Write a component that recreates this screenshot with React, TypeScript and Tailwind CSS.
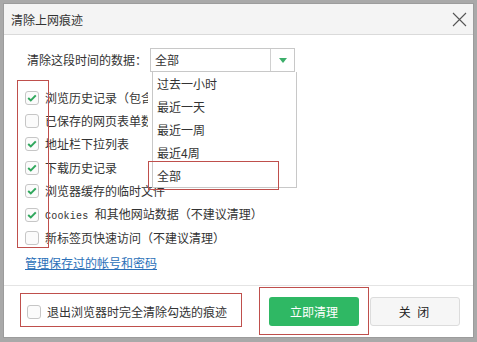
import React from "react";

const font = { fontFamily: '"Noto Sans CJK SC", "Noto Sans", sans-serif' };

function Box({ checked }: { checked: boolean }) {
  return (
    <span className="flex h-[14px] w-[14px] shrink-0 items-center justify-center rounded-[3px] border border-[#c6c6c6] bg-[#fbfbfb]">
      {checked && (
        <svg width="10" height="8" viewBox="0 0 10 8">
          <polyline points="1.2,4 3.8,6.4 8.8,1.4" fill="none" stroke="#2fa75c" strokeWidth="2" />
        </svg>
      )}
    </span>
  );
}

const rows: { checked: boolean; label: React.ReactNode; clip?: boolean }[] = [
  { checked: true, label: "浏览历史记录（包含访问过的网址）", clip: true },
  { checked: false, label: "已保存的网页表单数据", clip: true },
  { checked: true, label: "地址栏下拉列表" },
  { checked: true, label: "下载历史记录" },
  { checked: true, label: "浏览器缓存的临时文件" },
  {
    checked: true,
    label: (
      <>
        <span className="text-[10px] tracking-[0.2px]" style={{ fontFamily: '"Liberation Mono", monospace' }}>
          Cookies{" "}
        </span>
        和其他网站数据（不建议清理）
      </>
    ),
  },
  { checked: false, label: "新标签页快速访问（不建议清理）" },
];

export default function App() {
  return (
    <div className="relative h-[342px] w-[477px] overflow-hidden bg-[#a9a9a9] pl-[3px] pt-[3px] text-[12px] text-[#333]" style={font}>
      <div className="flex h-[335px] w-[471px] flex-col border border-[#9c9c9c] bg-white">
        {/* title bar */}
        <div className="flex h-[31px] shrink-0 items-center justify-between border-b border-[#dadada] bg-[#f4f4f4] pl-[7px] pr-[6px]">
          <span className="pt-[1px] text-[12px] text-[#333]">清除上网痕迹</span>
          <svg width="15" height="15" viewBox="0 0 15 15">
            <path d="M1 1 L14 14 M14 1 L1 14" stroke="#555" strokeWidth="1.1" />
          </svg>
        </div>
        {/* body */}
        <div className="flex h-[250px] shrink-0 flex-col pl-[21px] pt-[13px]">
          <div className="flex h-[24px] items-center">
            <span className="w-[125px] pl-[2px]">清除这段时间的数据：</span>
            <div className="flex h-[24px] w-[145px] items-center border border-[#c8c8c8] bg-white">
              <span className="flex-1 pl-[4px]">全部</span>
              <span className="flex h-full w-[24px] items-center justify-center border-l border-[#d0d0d0]">
                <svg width="8" height="5" viewBox="0 0 8 5">
                  <polygon points="0,0 8,0 4,5" fill="#3cae6a" />
                </svg>
              </span>
            </div>
          </div>
          <div className="mt-[14px] flex flex-col">
            {rows.map((r, i) => (
              <div key={i} className="flex h-[23.4px] items-center gap-[6px]">
                <Box checked={r.checked} />
                <span className={r.clip ? "w-[103px] overflow-hidden whitespace-nowrap" : "whitespace-nowrap"}>{r.label}</span>
              </div>
            ))}
          </div>
          <a className="mt-[5px] w-fit text-[12px] leading-[16px] text-[#2a6fb8] underline">管理保存过的帐号和密码</a>
        </div>
        {/* footer */}
        <div className="flex flex-1 items-center border-t border-[#e4e4e4] pl-[23px] pr-[13px]">
          <div className="flex items-center gap-[6px]">
            <Box checked={false} />
            <span>退出浏览器时完全清除勾选的痕迹</span>
          </div>
          <div className="ml-auto flex gap-[11px]">
            <button className="flex h-[29px] w-[90px] items-center justify-center rounded-[3px] bg-[#2fb864] text-[12px] text-white">
              立即清理
            </button>
            <button className="flex h-[29px] w-[90px] items-center justify-center rounded-[3px] border border-[#dcdcdc] bg-[#f6f6f6] text-[12px] tracking-[2px] text-[#222]">
              关 闭
            </button>
          </div>
        </div>
      </div>

      {/* dropdown list overlay */}
      <div className="absolute left-[152px] top-[72px] flex h-[116px] w-[145px] flex-col border border-t-0 border-[#c8c8c8] bg-white">
        {["过去一小时", "最近一天", "最近一周", "最近4周", "全部"].map((t) => (
          <div key={t} className="flex h-[23.2px] items-center pl-[4px]">
            {t}
          </div>
        ))}
      </div>

      {/* red annotation boxes */}
      <div className="absolute left-[17px] top-[80px] h-[168px] w-[32px] border border-[#bf4f4c]" />
      <div className="absolute left-[148px] top-[161px] h-[29px] w-[131px] border border-[#bf4f4c]" />
      <div className="absolute left-[20px] top-[293px] h-[34px] w-[222px] border border-[#bf4f4c]" />
      <div className="absolute left-[259px] top-[287px] h-[48px] w-[110px] border border-[#bf4f4c]" />
    </div>
  );
}
